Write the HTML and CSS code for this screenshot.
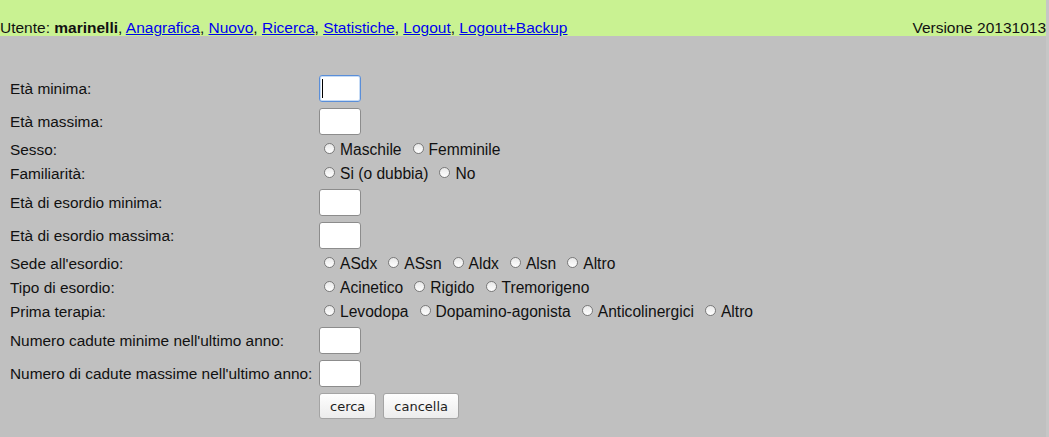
FILE: index.html
```html
<!DOCTYPE html>
<html lang="it">
<head>
<meta charset="utf-8">
<title>Ricerca</title>
<link rel="stylesheet" href="styles.css">
</head>
<body>
<div class="page">
  <div class="header">
    <div class="nav">Utente: <b>marinelli</b>, <a href="#">Anagrafica</a>, <a href="#">Nuovo</a>, <a href="#">Ricerca</a>, <a href="#">Statistiche</a>, <a href="#">Logout</a>, <a href="#">Logout+Backup</a></div>
    <div class="version">Versione 20131013</div>
  </div>
  <form class="form">
    <div class="row r-input"><div class="lbl">Età minima:</div><div class="fld"><span class="inwrap"><input class="txt focus" type="text"><span class="caret"></span></span></div></div>
    <div class="row r-input"><div class="lbl">Età massima:</div><div class="fld"><input class="txt" type="text"></div></div>
    <div class="row r-radio"><div class="lbl">Sesso:</div><div class="fld"><span class="opt"><span class="rad"></span>Maschile</span><span class="opt"><span class="rad"></span>Femminile</span></div></div>
    <div class="row r-radio"><div class="lbl">Familiarità:</div><div class="fld"><span class="opt"><span class="rad"></span>Si (o dubbia)</span><span class="opt"><span class="rad"></span>No</span></div></div>
    <div class="row r-input"><div class="lbl">Età di esordio minima:</div><div class="fld"><input class="txt" type="text"></div></div>
    <div class="row r-input"><div class="lbl">Età di esordio massima:</div><div class="fld"><input class="txt" type="text"></div></div>
    <div class="row r-radio"><div class="lbl">Sede all'esordio:</div><div class="fld"><span class="opt"><span class="rad"></span>ASdx</span><span class="opt"><span class="rad"></span>ASsn</span><span class="opt"><span class="rad"></span>Aldx</span><span class="opt"><span class="rad"></span>Alsn</span><span class="opt"><span class="rad"></span>Altro</span></div></div>
    <div class="row r-radio"><div class="lbl">Tipo di esordio:</div><div class="fld"><span class="opt"><span class="rad"></span>Acinetico</span><span class="opt"><span class="rad"></span>Rigido</span><span class="opt"><span class="rad"></span>Tremorigeno</span></div></div>
    <div class="row r-radio"><div class="lbl">Prima terapia:</div><div class="fld"><span class="opt"><span class="rad"></span>Levodopa</span><span class="opt"><span class="rad"></span>Dopamino-agonista</span><span class="opt"><span class="rad"></span>Anticolinergici</span><span class="opt"><span class="rad"></span>Altro</span></div></div>
    <div class="row r-input"><div class="lbl">Numero cadute minime nell'ultimo anno:</div><div class="fld"><input class="txt" type="text"></div></div>
    <div class="row r-input"><div class="lbl">Numero di cadute massime nell'ultimo anno:</div><div class="fld"><input class="txt" type="text"></div></div>
    <div class="row r-buttons"><div class="lbl"></div><div class="fld btns"><button type="button" class="btn">cerca</button><button type="button" class="btn">cancella</button></div></div>
  </form>
</div>
</body>
</html>
```
FILE: styles.css
```css
html {
  background: #c6c6c6;
}
body {
  margin: 0;
  font-family: "Liberation Sans", Arial, sans-serif;
  font-size: 15.4px;
  color: #111;
}
.page {
  width: 1046px;
  min-height: 437px;
  background: #c0c0c0;
}
.header {
  height: 36px;
  background: #c9f292;
  display: flex;
  justify-content: space-between;
  align-items: flex-end;
  font-size: 15.5px;
  line-height: 16px;
  white-space: nowrap;
}
.header a {
  color: #0000ee;
  text-decoration: underline;
}
.form {
  margin: 0;
  padding: 36px 0 0 10px;
  display: flex;
  flex-direction: column;
}
.row {
  display: flex;
  align-items: center;
}
.r-input { height: 33px; }
.r-radio { height: 24px; }
.r-buttons { height: 32px; align-items: flex-start; padding-top: 3px; }
.lbl {
  width: 309px;
  flex: none;
  white-space: nowrap;
}
.fld {
  display: flex;
  align-items: center;
  white-space: nowrap;
}
.inwrap {
  position: relative;
  display: inline-block;
}
.txt {
  box-sizing: border-box;
  width: 42px;
  height: 27px;
  margin: 0;
  padding: 0 3px;
  border: 1px solid #8c8c8c;
  border-radius: 3px;
  background: #fff;
  outline: none;
  display: block;
}
.txt.focus {
  border-color: #5a8ed8;
  box-shadow: inset 0 0 0 1px #c6dbf5;
}
.caret {
  position: absolute;
  left: 3px;
  top: 4px;
  width: 1px;
  height: 19px;
  background: #000;
}
.opt {
  display: inline-flex;
  align-items: center;
  margin-right: 6px;
  font-size: 15.6px;
}
.rad {
  box-sizing: border-box;
  width: 11px;
  height: 11px;
  border-radius: 50%;
  border: 1px solid #7a7a7a;
  background: linear-gradient(#e8e8e8, #ffffff);
  margin: -3px 5px 0 5px;
  flex: none;
}
.btns {
  gap: 7px;
}
.btn {
  box-sizing: border-box;
  height: 26px;
  margin: 0;
  padding: 0 10px;
  font-family: "DejaVu Sans", sans-serif;
  font-size: 13px;
  color: #1e1e1e;
  border: 1px solid #a4a4a4;
  border-radius: 3px;
  background: linear-gradient(#fefefe, #ececec);
}
```
